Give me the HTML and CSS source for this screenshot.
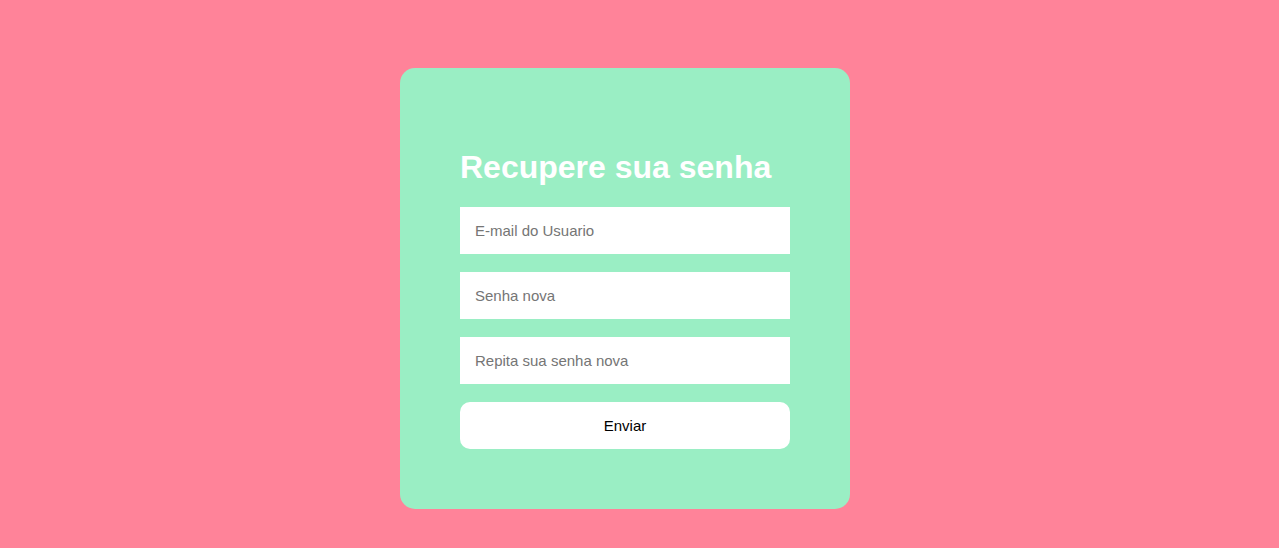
FILE: index.html
```html
<!DOCTYPE html>
<html lang="pt">
<head>
<meta charset="utf-8">
<title>Recupere sua senha</title>
<link rel="stylesheet" href="styles.css">
</head>
<body>
<main class="page">
  <form class="card">
    <h1 class="title">Recupere sua senha</h1>
    <input class="field" type="email" placeholder="E-mail do Usuario">
    <input class="field" type="password" placeholder="Senha nova">
    <input class="field" type="password" placeholder="Repita sua senha nova">
    <button class="submit" type="button">Enviar</button>
  </form>
</main>
</body>
</html>
```

FILE: styles.css
```css
html, body {
  margin: 0;
  padding: 0;
  height: 100%;
}
body {
  background: #ff8399;
  font-family: "Liberation Sans", Arial, sans-serif;
}
.page {
  padding: 68px 0 0 400px;
}
.card {
  box-sizing: border-box;
  width: 450px;
  background: #9aeec4;
  border-radius: 15px;
  padding: 81px 60px 60px;
  display: flex;
  flex-direction: column;
  gap: 18px;
}
.title {
  margin: 0 0 3px;
  color: #ffffff;
  font-size: 32px;
  font-weight: bold;
  line-height: 37px;
}
.field {
  box-sizing: border-box;
  height: 47px;
  border: none;
  outline: none;
  background: #ffffff;
  padding: 0 15px;
  font-family: "Liberation Sans", Arial, sans-serif;
  font-size: 15px;
  color: #333;
}
.field::placeholder {
  color: #757575;
}
.submit {
  height: 47px;
  border: none;
  border-radius: 10px;
  background: #ffffff;
  font-family: "Liberation Sans", Arial, sans-serif;
  font-size: 15px;
  color: #000;
  cursor: pointer;
}
```
